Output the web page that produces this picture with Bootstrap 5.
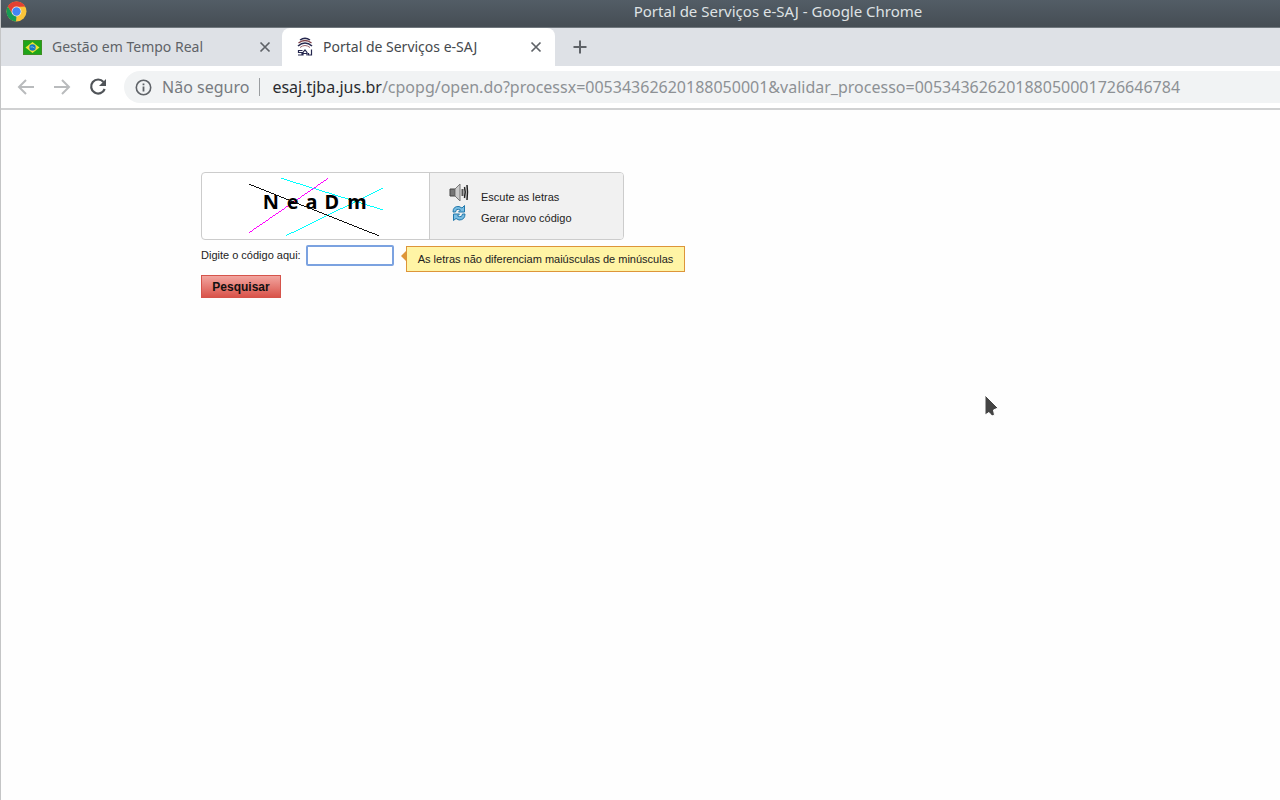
<!DOCTYPE html>
<html lang="pt-BR">
<head>
<meta charset="utf-8">
<meta name="viewport" content="width=device-width, initial-scale=1">
<title>Portal de Serviços e-SAJ</title>
<link href="https://cdn.jsdelivr.net/npm/bootstrap@5.3.0/dist/css/bootstrap.min.css" rel="stylesheet">
<script src="https://cdn.jsdelivr.net/npm/bootstrap@5.3.0/dist/js/bootstrap.bundle.min.js" defer></script>
<style>
body{font-family:"Noto Sans",sans-serif;background:#fefefe;border-left:1px solid #c4c5c6;overflow-x:hidden}
svg{display:block;flex:none}
.titlebar{height:28px;margin-left:-1px;background:linear-gradient(#535d66,#454d54);border-bottom:1px solid #71787e;color:#dfe2e4;font-size:15px;line-height:22px}
.titlebar .app-icon{left:6px;top:1px}
.titlebar .caption{padding-left:276px}
.tabstrip{height:38px;background:#dee1e6;font-size:14px;line-height:20px;color:#5f6368}
.tab{height:38px;color:inherit}
.tab-idle{width:281px;padding:0 10px 0 22px;border-bottom-right-radius:8px}
.tab-open{width:273px;padding:0 12px 0 15px;background:#fff;border-radius:8px 8px 0 0;color:#45494d}
.tab a{color:inherit;margin-left:10px}
.icon-btn{background:none;border:0;padding:0;color:#5f6368}
.toolbar{height:44px;background:#fff;border-bottom:2px solid #d0d1d2;padding:0 0 0 16px}
.nav-buttons{gap:18px}
.address{height:32px;margin-left:17px;padding-left:11px;background:#f1f3f4;border-radius:16px 0 0 16px;font-size:16px;line-height:24px;color:#777b80}
.address .state{margin-left:10px}
.address .divider{width:1px;height:18px;background:#9a9da0;margin:0 12px 0 10px}
.url-box{color:#8d9195;white-space:nowrap}
.url-box b{font-weight:400;color:#2a2c2f}
.page{font-family:"Liberation Sans",Arial,sans-serif;font-size:11px;line-height:20px;color:#222;padding:62px 16px 16px 200px}
.captcha{width:423px;max-width:100%;height:68px;border:1px solid #ccc;border-radius:4px;background:#fff;overflow:hidden}
.captcha .picture{width:228px;border-right:1px solid #ccc}
.captcha .options{background:#f1f1f1;padding:9px 0 0 19px}
.captcha a{color:#222;height:21px}
.captcha a span{padding-top:5px}
.code-row{margin-top:5px}
.code-row label{width:103px}
.code-input{width:88px;height:21px;border:2px solid #7ba2e0;border-radius:2px;background:#fff;outline:0;padding:0 3px;margin-left:2px}
.hint{width:279px;margin-left:12px;margin-top:1px;height:26px;padding-top:2px;border:1px solid #dd9539;background:#fff4a5}
.hint::before{content:"";position:absolute;left:-6px;top:4px;border:5px solid transparent;border-right-color:#dd9539;border-left:0}
.search-btn{width:80px;height:23px;margin-top:3px;padding:0;border:1px solid #d5544b;background:linear-gradient(#f2a59f,#d9534a);font-size:12px;font-weight:700;color:#111;line-height:20px}
.pointer{left:984px;top:394px;pointer-events:none}
</style>
</head>
<body class="min-vh-100">
<header>
<div class="titlebar position-relative">
<svg class="app-icon position-absolute" width="21" height="21" viewBox="0 0 21 21"><circle cx="10.500" cy="10.500" r="10" fill="#fbc53a"/><path d="M1.800 5.500A10 10 0 0 1 19.200 5.500L10.500 6 6.500 13z" fill="#e34133"/><path d="M1.800 5.500 6.500 13 10.500 15.200 10 20.500A10 10 0 0 1 1.800 5.500z" fill="#169b55"/><circle cx="10.500" cy="10.500" r="4.900" fill="#fff0dc"/><circle cx="10.500" cy="10.500" r="4.200" fill="#4285f4"/></svg>
<div class="caption text-center">Portal de Serviços e-SAJ - Google Chrome</div>
</div>
<nav class="tabstrip d-flex" aria-label="Abas">
<div class="tab tab-idle d-flex align-items-center">
<svg width="19" height="15" viewBox="0 0 19 15"><path fill="#3f8f25" d="M0 0h19v15H0z"/><path fill="#1fa51a" d="M1 1h17v13H1z"/><path d="M9.500 2 16.500 7.500 9.500 13 2.500 7.500z" fill="#f0e533"/><circle cx="9.500" cy="7.500" r="3.200" fill="#1676c4"/><path d="M7.500 7q2-.7 4 1" stroke="#9fd8ef" stroke-width=".7" fill="none"/></svg>
<a href="#" class="text-decoration-none me-auto">Gestão em Tempo Real</a>
<button class="icon-btn" aria-label="Fechar aba"><svg width="14" height="14" viewBox="0 0 14 14"><path d="M2.500 2.500l9 9M11.500 2.500l-9 9" stroke="currentColor" stroke-width="1.700"/></svg></button>
</div>
<div class="tab tab-open d-flex align-items-center">
<svg width="16" height="20" viewBox="0 0 16 20" fill="none" stroke="#26284f"><path d="M3 3Q8-.5 13 3" stroke-width="1.500"/><path d="M1.500 6Q8 1 14.500 6" stroke="#7d3f46" stroke-width="1.300"/><path d="M1 9Q8 3 15 9" stroke-width="1.600"/><path d="M3 10.500Q8 6.500 13 10.500" stroke="#99616a"/><path d="M5.500 13.500H1.500V15.500H5V18H1M6 18.500V15.500L8 13 10 15.500V18.500M6 16.500H10M14.500 12.500V18H11.500V16" stroke-width="1.200"/></svg>
<a href="#" class="text-decoration-none me-auto">Portal de Serviços e-SAJ</a>
<button class="icon-btn" aria-label="Fechar aba"><svg width="14" height="14" viewBox="0 0 14 14"><path d="M2.500 2.500l9 9M11.500 2.500l-9 9" stroke="currentColor" stroke-width="1.700"/></svg></button>
</div>
<button class="icon-btn ms-3" aria-label="Nova aba"><svg width="18" height="18" viewBox="0 0 18 18"><path d="M9 2.500v13M2.500 9h13" stroke="currentColor" stroke-width="2"/></svg></button>
</nav>
<div class="toolbar d-flex align-items-center">
<div class="nav-buttons d-flex">
<button class="icon-btn" aria-label="Voltar"><svg width="18" height="18" viewBox="0 0 18 18" fill="none" stroke="#b9bbbd" stroke-width="2"><path d="M17 9H2M9 2 2 9l7 7"/></svg></button>
<button class="icon-btn" aria-label="Avançar"><svg width="18" height="18" viewBox="0 0 18 18" fill="none" stroke="#b9bbbd" stroke-width="2"><path d="M1 9h15M9 2l7 7-7 7"/></svg></button>
<button class="icon-btn" aria-label="Recarregar"><svg width="18" height="18" viewBox="0 0 18 18"><path d="M14.500 4A7 7 0 1 0 15.700 11" fill="none" stroke="#505458" stroke-width="2.200"/><path d="M17 1v7h-7z" fill="#505458"/></svg></button>
</div>
<div class="address d-flex align-items-center flex-grow-1 overflow-hidden">
<svg width="17" height="17" viewBox="0 0 17 17"><circle cx="8.500" cy="8.500" r="7.200" fill="none" stroke="#5f6368" stroke-width="1.600"/><path d="M8.500 7.500v5M8.500 4.500v1.800" stroke="#5f6368" stroke-width="1.800"/></svg>
<span class="state text-nowrap">Não seguro</span><span class="divider"></span>
<div class="url-box" role="textbox" aria-label="Endereço"><b>esaj.tjba.jus.br</b>/cpopg/open.do?processx=00534362620188050001&amp;validar_processo=00534362620188050001726646784</div>
</div>
</div>
</header>
<main class="page">
<form onsubmit="return false">
<div class="captcha d-flex">
<svg class="picture" width="228" height="66" viewBox="0 0 228 66" role="img" aria-label="Código">
<g shape-rendering="crispEdges" fill="none"><path d="M79 5 182 37M84 63 182 15" stroke="#0ff"/><path d="M47 60 127 5" stroke="#f0f"/></g>
<text x="61 85 104 123 146" y="36" font-family="Noto Sans" font-size="20" font-weight="700">NeaDm</text>
<path d="M47 11 178 63" stroke="#111" shape-rendering="crispEdges"/>
</svg>
<div class="options flex-grow-1">
<a href="#" class="d-flex text-decoration-none"><svg width="20" height="20" viewBox="0 0 20 20"><path d="M1 7h5v7H1z" fill="#777" stroke="#444"/><path d="M6 7l5-5v17l-5-5z" fill="#ccc" stroke="#777"/><path d="M13.500 7v7" stroke="#555" stroke-width="2"/><path d="M15.500 5q1.500 5 0 11M18 3q1 7 0 15" fill="none" stroke="#222" stroke-width="1.500"/></svg><span class="ms-2 ps-1">Escute as letras</span></a>
<a href="#" class="d-flex text-decoration-none"><svg width="20" height="20" viewBox="0 0 20 20"><g fill="#79bde2" stroke="#2178ab"><path d="M4 9Q4 3 10 3.500L13 5 15.500 2.500V9H9.500L11.500 7Q7 5 6.500 9z"/><path d="M16 11Q16 17 10 17L7 15.500 4.500 17.500V11H10.500L8.500 13Q13 15 13.500 11z"/></g></svg><span class="ms-2 ps-1">Gerar novo código</span></a>
</div>
</div>
<div class="code-row d-flex align-items-start">
<label for="codigo" class="text-nowrap">Digite o código aqui:</label>
<input id="codigo" class="code-input" type="text" autocomplete="off">
<div class="hint position-relative text-nowrap text-center">As letras não diferenciam maiúsculas de minúsculas</div>
</div>
<button class="search-btn" type="submit">Pesquisar</button>
</form>
</main>
<svg class="pointer position-absolute" width="16" height="26" viewBox="0 0 16 26" aria-hidden="true"><path d="M1 1 14 14 9.500 16 10.500 21 8 22 5 18.500 1 21z" fill="#444" stroke="#fff"/></svg>
</body>
</html>
